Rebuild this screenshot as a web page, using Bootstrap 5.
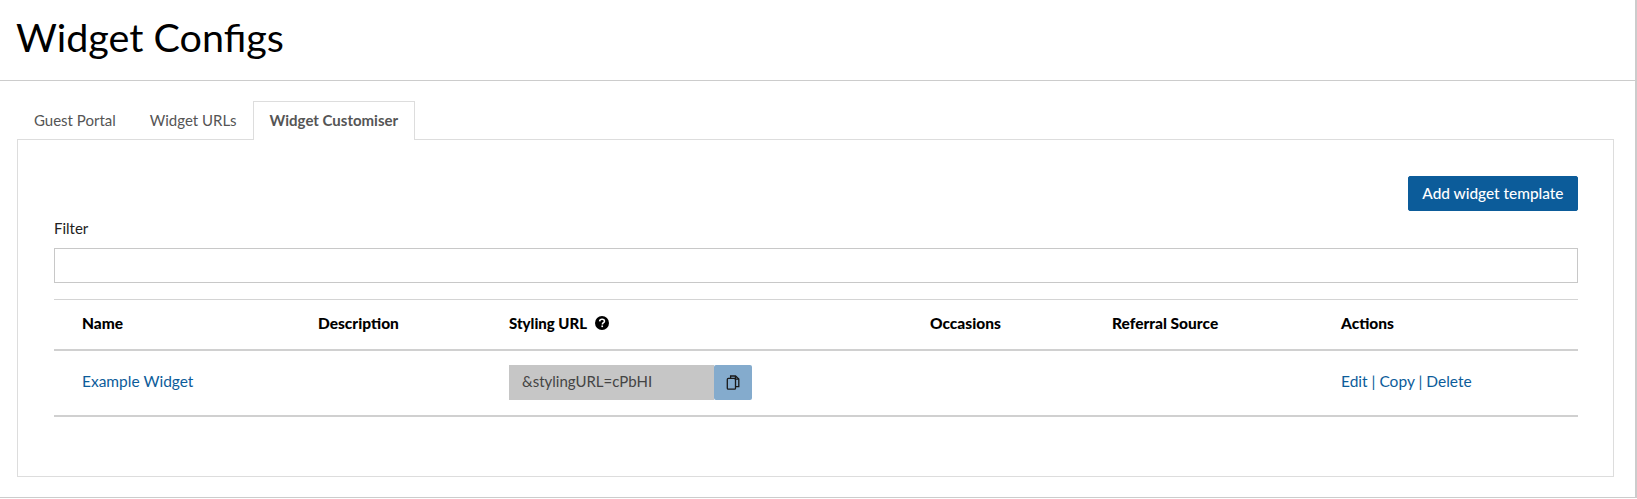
<!DOCTYPE html>
<html lang="en">
<head>
  <meta charset="UTF-8" />
  <meta name="viewport" content="width=device-width, initial-scale=1.0" />
  <title>Widget Configs</title>
  <link href="https://cdn.jsdelivr.net/npm/bootstrap@5.3.0/dist/css/bootstrap.min.css" rel="stylesheet">
  <style>
    body { font-family: "Lato", "Liberation Sans", sans-serif; font-size: 15px; color: #212529; background: #fff; }
    .page-wrap { height: 498px; border-right: 2px solid #ccc; border-bottom: 1px solid #ccc; }
    .page-head { height: 81px; padding: 15px 16px 0; border-bottom: 1px solid #ccc; }
    .page-head h1 { font-size: 39.5px; font-weight: 400; color: #000; margin: 0; line-height: 44px; }
    .page-body { padding: 20px 21px 0 17px; }
    .wc-tabs { border-bottom: 0; height: 38px; }
    .wc-tabs .nav-link { border-radius: 0; color: #555; font-size: 15px; height: 39px; padding: 7px 16px; border: 1px solid transparent; border-width: 1px 1px 0; margin: 0; }
    .wc-tabs .nav-item:nth-child(2) .nav-link { padding-right: 15px; }
    .wc-tabs .nav-link.active { color: #555; font-weight: 700; border-color: #ddd; background: #fff; position: relative; z-index: 1; }
    .wc-panel { border: 1px solid #ddd; height: 338px; padding: 36px 35px 0 36px; }
    .btn-add { background: #0c5c9a; border-color: #0c5c9a; color: #fff; border-radius: 2px; font-size: 15.4px; font-weight: 500; height: 35px; padding: 0 13.5px; line-height: 33px; }
    .filter-label { color: #222; font-size: 15px; line-height: 20px; margin: 7px 0 10px; display: block; }
    .filter-input { height: 35px; border: 1px solid #c8c8c8; border-radius: 0; }
    .wc-table { margin: 16px 0 0; width: 1524px; table-layout: fixed; border-top: 1px solid #d4d4d4; }
    .wc-table th, .wc-table td { border: 0; padding: 0 0 2px 28px; vertical-align: middle; font-size: 15.5px; }
    .wc-table td.url-cell { padding-bottom: 0; }
    .wc-table thead tr { height: 50px; border-bottom: 2px solid #d0d0d0; }
    .wc-table tbody tr { height: 66px; border-bottom: 2px solid #d0d0d0; }
    .wc-table th { color: #000; font-weight: 900; }
    .wc-table a, .wc-table .sep { color: #0c5c9a; text-decoration: none; }
    .th-url { font-size: 15px; }
    .url-group { width: 243px; height: 35px; }
    .url-text { flex: 1; background: #c6c6c6; color: #444; font-size: 15px; padding-left: 13px; line-height: 33px; }
    .url-copy { width: 38px; height: 35px; padding: 0; background: #84abcd; border: 0; border-radius: 2px; display: flex; align-items: center; justify-content: center; }
  </style>
</head>
<body>
  <div class="page-wrap">
    <div class="page-head">
      <h1>Widget Configs</h1>
    </div>
    <div class="page-body">
      <ul class="nav nav-tabs wc-tabs">
        <li class="nav-item"><a class="nav-link" href="#">Guest Portal</a></li>
        <li class="nav-item"><a class="nav-link" href="#">Widget URLs</a></li>
        <li class="nav-item"><a class="nav-link active" href="#">Widget Customiser</a></li>
      </ul>
      <div class="wc-panel">
        <div class="d-flex justify-content-end">
          <button type="button" class="btn btn-add">Add widget template</button>
        </div>
        <label class="filter-label" for="filter">Filter</label>
        <input id="filter" type="text" class="form-control filter-input">
        <table class="table wc-table">
          <colgroup>
            <col style="width:236px"><col style="width:191px"><col style="width:421px"><col style="width:182px"><col style="width:229px"><col style="width:265px">
          </colgroup>
          <thead>
            <tr>
              <th>Name</th>
              <th>Description</th>
              <th>
                <span class="d-inline-flex align-items-center gap-2 th-url">Styling URL
                  <svg width="14" height="14" viewBox="0 0 16 16"><circle cx="8" cy="8" r="8" fill="#000"/><path d="M5.3 6.1C5.4 4.6 6.5 3.7 8.1 3.7c1.6 0 2.7 1 2.7 2.2 0 1-.6 1.5-1.4 2-.7.5-.9.7-.9 1.4V9.7" fill="none" stroke="#fff" stroke-width="1.8"/><rect x="7.3" y="10.8" width="1.9" height="1.9" fill="#fff"/></svg>
                </span>
              </th>
              <th>Occasions</th>
              <th>Referral Source</th>
              <th>Actions</th>
            </tr>
          </thead>
          <tbody>
            <tr>
              <td><a href="#">Example Widget</a></td>
              <td></td>
              <td class="url-cell">
                <div class="d-flex url-group">
                  <div class="url-text">&amp;stylingURL=cPbHI</div>
                  <button type="button" class="url-copy" aria-label="Copy">
                    <svg width="14" height="15" viewBox="0 0 14 15" fill="none" stroke="#1a1a1a" stroke-width="1.3"><path d="M4.6 3.4V1h4.9l3.3 3v7.6H9.6"/><path d="M9.4 1v3.2h3.4"/><rect x="1.3" y="3.4" width="8.2" height="10.8" rx="1"/></svg>
                  </button>
                </div>
              </td>
              <td></td>
              <td></td>
              <td><a href="#">Edit</a> <span class="sep">|</span> <a href="#">Copy</a> <span class="sep">|</span> <a href="#">Delete</a></td>
            </tr>
          </tbody>
        </table>
      </div>
    </div>
  </div>
  <script src="https://cdn.jsdelivr.net/npm/bootstrap@5.3.0/dist/js/bootstrap.bundle.min.js"></script>
</body>
</html>
